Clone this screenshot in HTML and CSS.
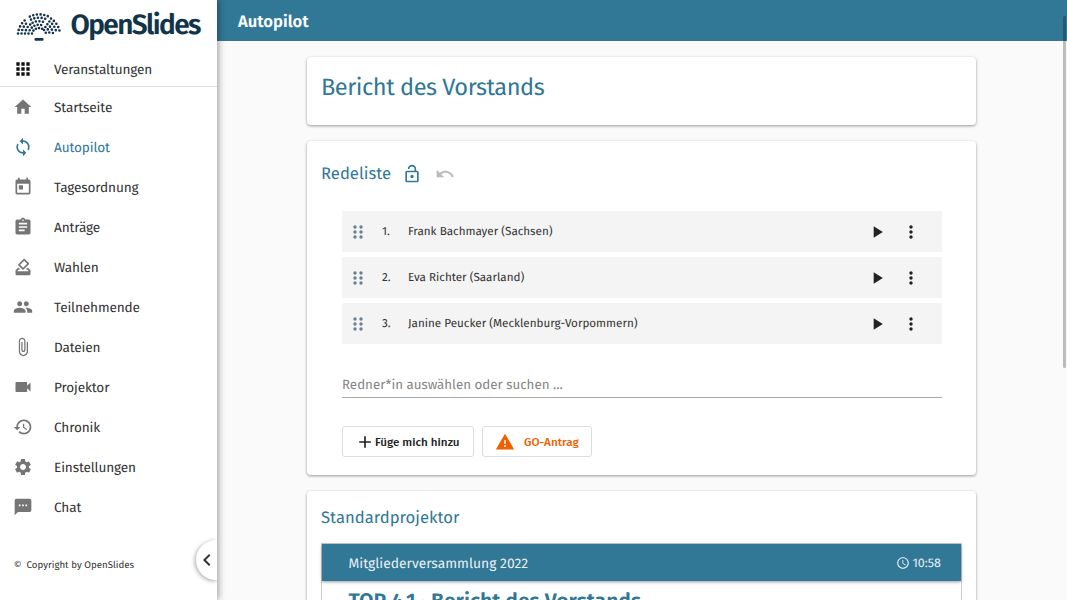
FILE: index.html
```
<!DOCTYPE html>
<html lang="de">
<head>
<meta charset="utf-8">
<title>OpenSlides – Autopilot</title>
<link rel="stylesheet" href="styles.css">
</head>
<body>
<div class="app">
  <aside class="sidebar">
    <div class="brand">
      <svg class="brand-mark" viewBox="0 0 46 34">
        <g fill="none" stroke="#12344a" stroke-width="2.6" stroke-linecap="round">
          <path stroke-dasharray="0 3.7" d="M2 23.500A21 20.500 0 0 1 11 8.600M13.800 6.600A21 20.500 0 0 1 32.800 6.600M35 8.600A21 20.500 0 0 1 44 23.500"/>
          <path stroke-dasharray="0 3.6" d="M5.500 23.500A17.500 17 0 0 1 12.600 11.500M15 9.600A17.500 17 0 0 1 31.100 9.600M33.400 11.500A17.500 17 0 0 1 40.500 23.500"/>
          <path stroke-dasharray="0 3.5" d="M9 23.500A14 13.500 0 0 1 14.600 14.300M16.600 12.700A14 13.500 0 0 1 29.500 12.700M31.400 14.300A14 13.500 0 0 1 37 23.500"/>
          <path stroke-dasharray="0 3.4" d="M12.500 23.500A10.500 10 0 0 1 16.600 17M18.400 15.800A10.500 10 0 0 1 27.700 15.800M29.400 17A10.500 10 0 0 1 33.500 23.500"/>
          <path stroke-dasharray="0 3.2" d="M16 23.500A7 6.500 0 0 1 18 20M19.900 18.800A7 6.500 0 0 1 26.200 18.800M28 20A7 6.500 0 0 1 30 23.500"/>
        </g>
        <rect x="18.500" y="28" width="9" height="2.700" rx="1" fill="#12344a"/>
      </svg>
      <span class="brand-name">OpenSlides</span>
    </div>
    <a class="nav-item nav-top"><svg class="icon dark" viewBox="0 0 24 24"><path d="M4 8h4V4H4v4zm6 12h4v-4h-4v4zm-6 0h4v-4H4v4zm0-6h4v-4H4v4zm6 0h4v-4h-4v4zm6-10v4h4V4h-4zm-6 4h4V4h-4v4zm6 6h4v-4h-4v4zm0 6h4v-4h-4v4z"/></svg><span>Veranstaltungen</span></a>
    <nav class="nav">
      <a class="nav-item"><svg class="icon" viewBox="0 0 24 24"><path d="M10 20v-6h4v6h5v-8h3L12 3 2 12h3v8z"/></svg><span>Startseite</span></a>
      <a class="nav-item active"><svg class="icon" viewBox="0 0 24 24"><path d="M12 4V1L8 5l4 4V6c3.31 0 6 2.69 6 6 0 1.01-.25 1.97-.7 2.8l1.46 1.46C19.54 15.03 20 13.57 20 12c0-4.42-3.58-8-8-8zm0 14c-3.31 0-6-2.69-6-6 0-1.01.25-1.97.7-2.8L5.24 7.74C4.46 8.97 4 10.43 4 12c0 4.42 3.58 8 8 8v3l4-4-4-4v3z"/></svg><span>Autopilot</span></a>
      <a class="nav-item"><svg class="icon" viewBox="0 0 24 24"><path d="M19 3h-1V1h-2v2H8V1H6v2H5c-1.11 0-1.99.9-1.99 2L3 19c0 1.1.89 2 2 2h14c1.1 0 2-.9 2-2V5c0-1.1-.9-2-2-2zm0 16H5V8h14v11zM7 10h5v5H7z"/></svg><span>Tagesordnung</span></a>
      <a class="nav-item"><svg class="icon" viewBox="0 0 24 24"><path d="M19 3h-4.18C14.4 1.84 13.3 1 12 1s-2.4.84-2.82 2H5c-1.1 0-2 .9-2 2v14c0 1.1.9 2 2 2h14c1.1 0 2-.9 2-2V5c0-1.1-.9-2-2-2zm-7 0c.55 0 1 .45 1 1s-.45 1-1 1-1-.45-1-1 .45-1 1-1zm2 14H7v-2h7v2zm3-4H7v-2h10v2zm0-4H7V7h10v2z"/></svg><span>Anträge</span></a>
      <a class="nav-item"><svg class="icon" viewBox="0 0 24 24"><path d="M18 13h-.68l-2 2h1.91L19 17H5l1.78-2h2.05l-2-2H6l-3 3v4c0 1.1.89 2 1.99 2H19c1.1 0 2-.89 2-2v-4l-3-3zm-1-5.05l-4.95 4.95-3.54-3.54 4.95-4.95L17 7.95zm-4.24-5.66L6.39 8.66c-.39.39-.39 1.02 0 1.41l4.95 4.95c.39.39 1.02.39 1.41 0l6.36-6.36c.39-.39.39-1.02 0-1.41L14.16 2.3c-.38-.4-1.01-.4-1.4-.01z"/></svg><span>Wahlen</span></a>
      <a class="nav-item"><svg class="icon" viewBox="0 0 24 24"><path d="M16 11c1.66 0 2.99-1.34 2.99-3S17.66 5 16 5s-3 1.34-3 3 1.34 3 3 3zm-8 0c1.66 0 2.99-1.34 2.99-3S9.66 5 8 5 5 6.34 5 8s1.34 3 3 3zm0 2c-2.33 0-7 1.17-7 3.5V19h14v-2.5c0-2.33-4.67-3.5-7-3.5zm8 0c-.29 0-.62.02-.97.05 1.16.84 1.97 1.97 1.97 3.45V19h6v-2.5c0-2.33-4.67-3.5-7-3.5z"/></svg><span>Teilnehmende</span></a>
      <a class="nav-item"><svg class="icon" viewBox="0 0 24 24"><path d="M16.5 6v11.5c0 2.21-1.79 4-4 4s-4-1.79-4-4V5c0-1.38 1.12-2.5 2.5-2.5s2.5 1.12 2.5 2.5v10.5c0 .55-.45 1-1 1s-1-.45-1-1V6H10v9.5c0 1.38 1.12 2.5 2.5 2.5s2.5-1.12 2.5-2.5V5c0-2.21-1.79-4-4-4S7 2.79 7 5v12.5c0 3.04 2.46 5.5 5.5 5.5s5.5-2.46 5.5-5.5V6h-1.5z"/></svg><span>Dateien</span></a>
      <a class="nav-item"><svg class="icon" viewBox="0 0 24 24"><path d="M17 10.5V7c0-.55-.45-1-1-1H4c-.55 0-1 .45-1 1v10c0 .55.45 1 1 1h12c.55 0 1-.45 1-1v-3.5l4 4v-11l-4 4z"/></svg><span>Projektor</span></a>
      <a class="nav-item"><svg class="icon" viewBox="0 0 24 24"><path d="M13 3c-4.970 0-9 4.030-9 9H1l3.890 3.890.07.14L9 12H6c0-3.870 3.130-7 7-7s7 3.130 7 7-3.130 7-7 7c-1.930 0-3.680-.79-4.940-2.060l-1.420 1.420C8.270 19.990 10.510 21 13 21c4.970 0 9-4.030 9-9s-4.030-9-9-9zm-1 5v5l4.280 2.540.72-1.210-3.500-2.080V8H12z"/></svg><span>Chronik</span></a>
      <a class="nav-item"><svg class="icon" viewBox="0 0 24 24"><path d="M19.140 12.940c.04-.3.06-.61.06-.94 0-.32-.02-.64-.07-.94l2.030-1.580c.18-.14.23-.41.12-.61l-1.920-3.320c-.12-.22-.37-.29-.59-.22l-2.390.96c-.5-.38-1.030-.7-1.620-.94l-.36-2.540c-.04-.24-.24-.41-.48-.41h-3.840c-.24 0-.43.17-.47.41l-.36 2.540c-.59.24-1.130.57-1.620.94l-2.390-.96c-.22-.08-.47 0-.59.22L2.740 8.870c-.12.21-.08.47.12.61l2.030 1.580c-.05.3-.09.63-.09.94s.02.64.07.94l-2.030 1.580c-.18.14-.23.41-.12.61l1.920 3.320c.12.22.37.29.59.22l2.390-.96c.5.38 1.030.7 1.620.94l.36 2.540c.05.24.24.41.48.41h3.840c.24 0 .44-.17.47-.41l.36-2.540c.59-.24 1.130-.56 1.620-.94l2.390.96c.22.08.47 0 .59-.22l1.920-3.320c.12-.22.07-.47-.12-.61l-2.010-1.580zM12 15.600c-1.980 0-3.600-1.620-3.600-3.600s1.620-3.600 3.600-3.600 3.600 1.620 3.600 3.600-1.620 3.600-3.600 3.600z"/></svg><span>Einstellungen</span></a>
      <a class="nav-item"><svg class="icon" viewBox="0 0 24 24"><path d="M20 2H4c-1.100 0-1.990.9-1.990 2L2 22l4-4h14c1.100 0 2-.9 2-2V4c0-1.100-.9-2-2-2zM9 11H7V9h2v2zm4 0h-2V9h2v2zm4 0h-2V9h2v2z"/></svg><span>Chat</span></a>
    </nav>
    <footer class="copyright"><span class="copy-sign">©</span><span class="copy-text">Copyright by OpenSlides</span></footer>
    <div class="collapse"><svg viewBox="0 0 24 24"><path d="M15.410 7.410L14 6l-6 6 6 6 1.410-1.410L10.830 12z"/></svg></div>
  </aside>
  <div class="content">
    <header class="topbar"><span>Autopilot</span></header>
    <main class="page">
      <section class="card title-card"><h1>Bericht des Vorstands</h1></section>
      <section class="card speakers">
        <h2 class="card-head"><span>Redeliste</span>
          <svg class="lock" viewBox="0 0 24 24"><path d="M12 17c1.100 0 2-.9 2-2s-.9-2-2-2-2 .9-2 2 .9 2 2 2zm6-9h-1V6c0-2.760-2.240-5-5-5S7 3.240 7 6h1.900c0-1.710 1.390-3.100 3.100-3.100s3.100 1.390 3.100 3.100v2H6c-1.100 0-2 .9-2 2v10c0 1.100.9 2 2 2h12c1.100 0 2-.9 2-2V10c0-1.100-.9-2-2-2zm0 12H6V10h12v10z"/></svg>
          <svg class="undo" viewBox="0 0 24 24"><path d="M12.500 8c-2.650 0-5.050.99-6.900 2.600L2 7v9h9l-3.620-3.620c1.390-1.160 3.160-1.880 5.120-1.880 3.540 0 6.550 2.310 7.600 5.500l2.370-.78C21.080 11.030 17.150 8 12.500 8z"/></svg>
        </h2>
        <ol class="rows">
          <li class="row"><svg class="drag" viewBox="0 0 10 14"><path d="M2 2h0M8 2h0M2 7h0M8 7h0M2 12h0M8 12h0"/></svg><span class="num">1.</span><span class="name">Frank Bachmayer (Sachsen)</span><svg class="act" viewBox="0 0 24 24"><path d="M8 5v14l11-7z"/></svg><svg class="act more" viewBox="0 0 24 24"><path d="M12 8c1.100 0 2-.9 2-2s-.9-2-2-2-2 .9-2 2 .9 2 2 2zm0 2c-1.100 0-2 .9-2 2s.9 2 2 2 2-.9 2-2-.9-2-2-2zm0 6c-1.100 0-2 .9-2 2s.9 2 2 2 2-.9 2-2-.9-2-2-2z"/></svg></li>
          <li class="row"><svg class="drag" viewBox="0 0 10 14"><path d="M2 2h0M8 2h0M2 7h0M8 7h0M2 12h0M8 12h0"/></svg><span class="num">2.</span><span class="name">Eva Richter (Saarland)</span><svg class="act" viewBox="0 0 24 24"><path d="M8 5v14l11-7z"/></svg><svg class="act more" viewBox="0 0 24 24"><path d="M12 8c1.100 0 2-.9 2-2s-.9-2-2-2-2 .9-2 2 .9 2 2 2zm0 2c-1.100 0-2 .9-2 2s.9 2 2 2 2-.9 2-2-.9-2-2-2zm0 6c-1.100 0-2 .9-2 2s.9 2 2 2 2-.9 2-2-.9-2-2-2z"/></svg></li>
          <li class="row"><svg class="drag" viewBox="0 0 10 14"><path d="M2 2h0M8 2h0M2 7h0M8 7h0M2 12h0M8 12h0"/></svg><span class="num">3.</span><span class="name">Janine Peucker (Mecklenburg-Vorpommern)</span><svg class="act" viewBox="0 0 24 24"><path d="M8 5v14l11-7z"/></svg><svg class="act more" viewBox="0 0 24 24"><path d="M12 8c1.100 0 2-.9 2-2s-.9-2-2-2-2 .9-2 2 .9 2 2 2zm0 2c-1.100 0-2 .9-2 2s.9 2 2 2 2-.9 2-2-.9-2-2-2zm0 6c-1.100 0-2 .9-2 2s.9 2 2 2 2-.9 2-2-.9-2-2-2z"/></svg></li>
        </ol>
        <div class="search"><span>Redner*in auswählen oder suchen ...</span></div>
        <div class="buttons">
          <button class="btn add"><svg viewBox="0 0 24 24"><path d="M19 13h-6v6h-2v-6H5v-2h6V5h2v6h6v2z"/></svg><span>Füge mich hinzu</span></button>
          <button class="btn go"><svg viewBox="0 0 24 24"><path d="M1 21h22L12 2 1 21zm12-3h-2v-2h2v2zm0-4h-2v-4h2v4z"/></svg><span>GO-Antrag</span></button>
        </div>
      </section>
      <section class="card projector">
        <h2><span>Standardprojektor</span></h2>
        <div class="screen">
          <div class="screen-bar"><span class="event">Mitgliederversammlung 2022</span><svg viewBox="0 0 24 24"><path d="M11.990 2C6.470 2 2 6.480 2 12s4.470 10 9.990 10C17.520 22 22 17.520 22 12S17.520 2 11.990 2zM12 20c-4.420 0-8-3.580-8-8s3.580-8 8-8 8 3.580 8 8-3.580 8-8 8zm.5-13H11v6l5.250 3.150.75-1.230-4.500-2.670z"/></svg><span class="time">10:58</span></div>
          <h3>TOP 4.1 · Bericht des Vorstands</h3>
        </div>
      </section>
    </main>
    <div class="scroll-thumb"></div>
  </div>
</div>
</body>
</html>
```
FILE: styles.css
```
* { box-sizing: border-box; }
body { margin: 0; font-family: "Fira Sans", "Noto Sans", "Open Sans", sans-serif; color: #333; background: #fafafa; text-rendering: geometricPrecision; }
h1, h2, h3, ol { margin: 0; padding: 0; font-weight: 400; }
svg { display: block; flex: none; fill: currentColor; }
span, h1, h3 { white-space: nowrap; }
.app { display: flex; width: 1067px; height: 600px; overflow: hidden; }

.sidebar { position: relative; z-index: 2; flex: none; width: 217px; background: #fff; box-shadow: 1px 0 7px rgba(0,0,0,.42); }
.brand { display: flex; height: 52px; padding-left: 15.5px; }
.brand-mark { width: 46px; height: 34px; margin-top: 9.5px; }
.brand-name { margin: 7px 0 0 9px; font-size: 28px; line-height: 38px; font-weight: 600; letter-spacing: -1.6px; color: #12344a; }
.nav-item { display: flex; align-items: center; height: 40px; padding-left: 13.3px; font-size: 13.6px; letter-spacing: -.13px; }
.nav-item span { margin-left: 20.7px; padding-top: 1px; }
.nav-top { height: 35px; border-bottom: 1px solid #e0e0e0; }
.icon { width: 20px; height: 20px; color: #757575; }
.icon.dark { color: #111; }
.active, .active .icon { color: #317796; }
.copyright { display: flex; margin-top: 29.5px; padding-left: 13.7px; font-size: 9.7px; line-height: 17px; }
.copy-text { margin-left: 5px; }
.collapse { position: absolute; right: 0; top: 540px; width: 21px; height: 40px; border-radius: 20px 0 0 20px; background: #fff; box-shadow: -1px 1px 4px rgba(0,0,0,.35); clip-path: inset(-8px 0 -8px -8px); }
.collapse svg { width: 24px; height: 24px; margin-top: 8px; margin-left: -1.5px; }

.content { position: relative; flex: 1; }
.topbar { display: flex; align-items: center; height: 41.3px; padding: 2px 0 0 21px; background: #317796; color: #fff; font-size: 16.67px; font-weight: 600; }
.page { display: flex; flex-direction: column; gap: 16.6px; width: 669px; margin: 15.3px 0 0 90px; }
.card { border-radius: 4px; background: #fff; box-shadow: 0 1px 3px rgba(0,0,0,.4); color: #317796; padding: 0 14px; }
.title-card { height: 68.3px; padding-top: 13px; }
h1 { font-size: 23.6px; line-height: 36px; letter-spacing: -.48px; }
.speakers { height: 333.4px; padding-top: 21px; }
.card-head { display: flex; align-items: center; height: 24px; }
h2 { font-size: 16.67px; line-height: 24px; }
.lock { width: 20px; height: 20px; margin-left: 11px; }
.undo { width: 20px; height: 20px; margin-left: 13px; color: #bbb; }
.rows { display: flex; flex-direction: column; gap: 4.5px; margin: 24.3px 20px 0 21px; list-style: none; }
.row { display: flex; align-items: center; height: 41.4px; padding: 2px 21px 0 11px; background: #f4f4f4; font-size: 11.67px; color: #333; }
.row span { padding-bottom: 1px; }
.drag { width: 10px; height: 14px; stroke: #6a7f94; stroke-width: 3.4px; stroke-linecap: round; }
.num { width: 26px; margin-left: 19px; }
.name { flex: 1; }
.act { width: 20px; height: 20px; color: #222; }
.more { margin-left: 14px; }
.search { display: flex; align-items: center; height: 27px; margin: 27px 20px 0 21px; padding-top: 2px; border-bottom: 1px solid #aaa; font-size: 13.33px; color: #858585; }
.buttons { display: flex; gap: 8px; margin: 28.5px 0 0 21px; }
.btn { display: flex; align-items: center; height: 31px; border: 1px solid #ddd; border-radius: 3px; background: #fff; font: 500 11.67px "Fira Sans", "Noto Sans", sans-serif; color: #222; padding: 1px 0 0 12px; }
.add { width: 132px; }
.add svg { width: 20px; height: 20px; }
.go { width: 110px; color: #f06000; }
.go svg { width: 20px; height: 20px; }
.go span { margin-left: 9px; }
.projector { height: 300px; padding-top: 15px; }
.screen { height: 260px; margin-top: 12.4px; border: 1px solid #ccc; }
.screen-bar { display: flex; align-items: center; height: 37px; padding: 2px 20px 0 26.6px; background: #317796; color: #e8f0f4; font-size: 13.85px; box-shadow: 0 1px 3px rgba(0,0,0,.4); }
.event { flex: 1; }
.screen-bar svg { width: 14px; height: 14px; margin-right: 2px; }
.time { font-size: 12.5px; }
h3 { padding-left: 26.5px; padding-top: 5px; font-size: 21.1px; line-height: 30px; font-weight: 600; }
.scroll-thumb { position: absolute; right: 1px; top: 16px; width: 3px; height: 352px; border-radius: 2px; background: rgba(0,0,0,.25); }
```
